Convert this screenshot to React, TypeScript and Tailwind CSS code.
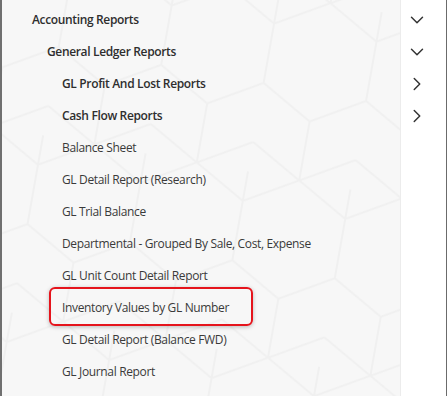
import { ChevronDown, ChevronRight } from 'lucide-react';

type Row = {
    label: string;
    level: 1 | 2 | 3;
    bold?: boolean;
    toggle?: 'open' | 'closed';
    highlight?: boolean;
};

const rows: Row[] = [
    { label: 'Accounting Reports', level: 1, bold: true, toggle: 'open' },
    { label: 'General Ledger Reports', level: 2, bold: true, toggle: 'open' },
    { label: 'GL Profit And Lost Reports', level: 3, bold: true, toggle: 'closed' },
    { label: 'Cash Flow Reports', level: 3, bold: true, toggle: 'closed' },
    { label: 'Balance Sheet', level: 3 },
    { label: 'GL Detail Report (Research)', level: 3 },
    { label: 'GL Trial Balance', level: 3 },
    { label: 'Departmental - Grouped By Sale, Cost, Expense', level: 3 },
    { label: 'GL Unit Count Detail Report', level: 3 },
    { label: 'Inventory Values by GL Number', level: 3, highlight: true },
    { label: 'GL Detail Report (Balance FWD)', level: 3 },
    { label: 'GL Journal Report', level: 3 },
];

const indent = { 1: 'pl-[30px]', 2: 'pl-[45px]', 3: 'pl-[60px]' };

/** Faint honeycomb drawn behind the list, like the app's wallpaper. */
function Honeycomb() {
    return (
        <svg aria-hidden className="absolute inset-0 h-full w-full" xmlns="http://www.w3.org/2000/svg">
            <defs>
                <pattern id="hex" width="104" height="180" patternUnits="userSpaceOnUse" patternTransform="translate(-30 -60) rotate(10)">
                    <path
                        d="M52 0 L104 30 L104 90 L52 120 L0 90 L0 30 Z M52 120 L52 180 M0 30 L0 -30 M104 30 L104 -30"
                        fill="none"
                        stroke="#f0f0f0"
                        strokeWidth="2"
                    />
                    <path d="M0 150 L52 180 L104 150" fill="none" stroke="#f0f0f0" strokeWidth="2" />
                </pattern>
            </defs>
            <rect width="100%" height="100%" fill="url(#hex)" />
        </svg>
    );
}

export default function App() {
    return (
        <div
            className="flex h-[396px] w-[447px] overflow-hidden border-l-2 border-r border-l-[#707070] border-r-[#6b6b6b] bg-[#f7f7f7] text-[12px] text-[#3a3a3a]"
            style={{ fontFamily: '"Open Sans", "Noto Sans", sans-serif' }}
        >
            <div className="relative flex-1">
                <Honeycomb />
                <ul className="relative pt-[4px]">
                    {rows.map((r) => (
                        <li
                            key={r.label}
                            className={`relative flex h-8 items-center tracking-[-0.35px] ${indent[r.level]} ${
                                r.bold ? 'font-semibold text-[#2e2e2e]' : ''
                            }`}
                        >
                            {r.highlight && (
                                <span className="absolute -top-[5px] left-[47px] h-[39px] w-[204px] rounded-[6px] border-2 border-[#e5141c] shadow-[0_1px_4px_rgba(0,0,0,0.25)]" />
                            )}
                            {r.label}
                        </li>
                    ))}
                </ul>
            </div>
            <ul className="w-[46px] border-l border-[#ececec] bg-white pt-[4px]">
                {rows.map((r) => (
                    <li key={r.label} className="flex h-8 items-center pl-[5px] text-[#333]">
                        {r.toggle === 'open' && <ChevronDown size={22} strokeWidth={1.6} />}
                        {r.toggle === 'closed' && <ChevronRight size={22} strokeWidth={1.6} />}
                    </li>
                ))}
            </ul>
        </div>
    );
}
